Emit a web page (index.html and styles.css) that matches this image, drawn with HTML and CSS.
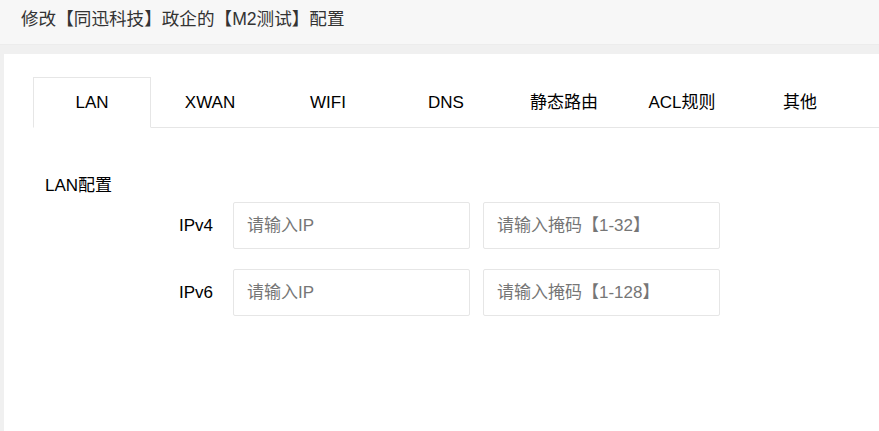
FILE: index.html
```html
<!DOCTYPE html>
<html lang="zh">
<head>
<meta charset="utf-8">
<title>配置</title>
<link rel="stylesheet" href="styles.css">
</head>
<body>
<header class="page-header">修改【同迅科技】政企的【M2测试】配置</header>
<main class="card">
  <ul class="tabs">
    <li class="tab active">LAN</li>
    <li class="tab">XWAN</li>
    <li class="tab">WIFI</li>
    <li class="tab">DNS</li>
    <li class="tab">静态路由</li>
    <li class="tab">ACL规则</li>
    <li class="tab">其他</li>
  </ul>
  <section class="form">
    <div class="section-title">LAN配置</div>
    <div class="row">
      <label class="label">IPv4</label>
      <input class="input" type="text" placeholder="请输入IP">
      <input class="input" type="text" placeholder="请输入掩码【1-32】">
    </div>
    <div class="row">
      <label class="label">IPv6</label>
      <input class="input" type="text" placeholder="请输入IP">
      <input class="input" type="text" placeholder="请输入掩码【1-128】">
    </div>
  </section>
</main>
</body>
</html>
```
FILE: styles.css
```css
* { box-sizing: border-box; }
html, body { margin: 0; padding: 0; height: 100%; }
body {
  background: #f0f0f0;
  font-family: "Liberation Sans", "Noto Sans CJK SC", sans-serif;
  color: #000;
  overflow: hidden;
  display: flex;
  flex-direction: column;
}
.page-header {
  flex: none;
  height: 45px;
  background: #f7f7f7;
  padding-left: 21px;
  line-height: 39px;
  font-size: 17.6px;
  color: #333;
  border-bottom: 1px solid #ececec;
}
.card {
  flex: 1;
  background: #fff;
  margin: 9px 0 0 4px;
  padding: 23px 0 0 29px;
}
.tabs {
  list-style: none;
  margin: 0;
  padding: 0;
  display: flex;
  border-bottom: 1px solid #e6e6e6;
}
.tab {
  width: 118px;
  height: 51px;
  line-height: 50px;
  text-align: center;
  font-size: 17px;
  color: #000;
  border: 1px solid transparent;
  margin-bottom: -1px;
}
.tab.active {
  border-color: #e6e6e6;
  border-bottom-color: #fff;
  background: #fff;
}
.form {
  padding: 46px 0 0 12px;
}
.section-title {
  font-size: 17px;
  line-height: 24px;
  height: 28px;
}
.row {
  display: flex;
  align-items: center;
  gap: 13px;
  margin-bottom: 20px;
}
.label {
  width: 168px;
  margin-right: 7px;
  text-align: right;
  font-size: 17px;
}
.input {
  width: 237px;
  height: 47px;
  border: 1px solid #e6e6e6;
  border-radius: 2px;
  padding: 0 13px;
  font-family: inherit;
  font-size: 17px;
  outline: none;
}
.input::placeholder { color: #767676; }
```
